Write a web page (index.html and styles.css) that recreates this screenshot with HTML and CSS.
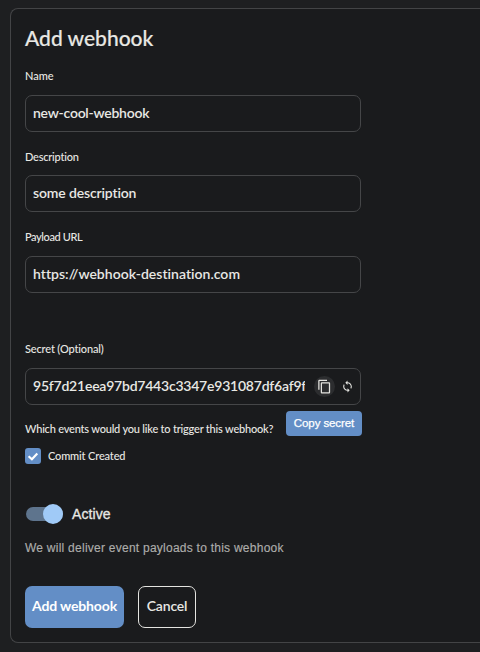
FILE: index.html
```html
<!DOCTYPE html>
<html lang="en">
<head>
<meta charset="utf-8">
<title>Add webhook</title>
<link rel="stylesheet" href="styles.css">
</head>
<body>
<main class="card">
  <h1 class="title">Add webhook</h1>
  <div class="field field-name">
    <div class="label">Name</div>
    <div class="input"><span class="v-name">new-cool-webhook</span></div>
  </div>
  <div class="field field-desc">
    <div class="label l-desc">Description</div>
    <div class="input"><span class="v-desc">some description</span></div>
  </div>
  <div class="field field-url">
    <div class="label l-url">Payload URL</div>
    <div class="input"><span class="v-url">https://webhook-destination.com</span></div>
  </div>
  <div class="field field-secret">
    <div class="label l-secret">Secret (Optional)</div>
    <div class="input">
      <span class="secret">95f7d21eea97bd7443c3347e931087df6af9f</span>
      <span class="copy">
        <svg width="15" height="15" viewBox="0 0 24 24" fill="#e4e4e0"><path d="M16 1H4c-1.100 0-2 .9-2 2v14h2V3h12zm3 4H8c-1.100 0-2 .9-2 2v14c0 1.100.9 2 2 2h11c1.100 0 2-.9 2-2V7c0-1.100-.9-2-2-2m0 16H8V7h11z"/></svg>
      </span>
      <svg class="renew" width="13" height="13" viewBox="0 0 24 24" fill="#e4e4e0"><path d="M12 4V1L8 5l4 4V6c3.310 0 6 2.690 6 6 0 1.010-.25 1.970-.7 2.800l1.460 1.460C19.540 15.030 20 13.570 20 12c0-4.420-3.580-8-8-8m0 14c-3.310 0-6-2.690-6-6 0-1.010.25-1.970.7-2.800L5.240 7.740C4.460 8.970 4 10.430 4 12c0 4.420 3.580 8 8 8v3l4-4-4-4z"/></svg>
      <span class="tooltip">Copy secret</span>
    </div>
  </div>
  <div class="question">Which events would you like to trigger this webhook?</div>
  <div class="check-row">
    <span class="checkbox"><svg width="16" height="16" viewBox="0 0 16 16"><path d="M3.600 8.300 6.900 11.300 12.300 5.600" fill="none" stroke="#fff" stroke-width="2.200"/></svg></span>
    <span class="check-label">Commit Created</span>
  </div>
  <div class="switch-row">
    <span class="track"><span class="knob"></span></span>
    <span class="active">Active</span>
  </div>
  <p class="hint">We will deliver event payloads to this webhook</p>
  <div class="actions">
    <button class="btn primary">Add webhook</button>
    <button class="btn outline">Cancel</button>
  </div>
</main>
</body>
</html>
```
FILE: styles.css
```css
* { box-sizing: border-box; }
body {
  margin: 0;
  height: 652px;
  padding: 8px 0 0 10px;
  overflow: hidden;
  background: #1e1f21;
  color: #e8e8e4;
  font-family: Lato, "Liberation Sans", sans-serif;
}
.card {
  height: 635px;
  padding: 16px 14px 14px;
  border: 1px solid #434446;
  border-right: 0;
  border-radius: 8px 0 0 8px;
  background: #1a1b1d;
}
.title {
  margin: 0 0 15px;
  font-size: 21px;
  line-height: 26px;
  font-weight: 500;
  letter-spacing: 0;
  -webkit-text-stroke: .15px #e8e8e4;
}
.field { width: 336px; margin-bottom: 16px; }
.label {
  height: 20px;
  margin-bottom: 8px;
  font-size: 11px;
  line-height: 20px;
  font-weight: 500;
}
.field-name .label { margin-bottom: 9px; }
.field-name { margin-bottom: 15px; }
.field-desc { margin-bottom: 15px; }
.field-url .label, .field-secret .label { margin-bottom: 9px; }
.l-desc { letter-spacing: -.22px; }
.l-url { letter-spacing: -.4px; }
.l-secret { letter-spacing: -.15px; }
.input {
  position: relative;
  display: flex;
  align-items: center;
  height: 37px;
  padding: 0 7px 2px;
  border: 1px solid #454648;
  border-radius: 7px;
  font-size: 14px;
  font-weight: 600;
  white-space: nowrap;
}
.v-name { letter-spacing: -.25px; }
.v-desc { letter-spacing: -.15px; }
.v-url { letter-spacing: .02px; }
.field-url { margin-bottom: 46px; }
.field-secret { margin-bottom: 15px; }
.field-secret .input { padding: 0 6px 0 7px; }
.secret { flex: none; width: 272px; padding-bottom: 2px; overflow: hidden; letter-spacing: -.22px; }
.copy {
  display: flex;
  flex: none;
  align-items: center;
  justify-content: center;
  width: 21px;
  height: 21px;
  margin-left: 9px;
  border-radius: 50%;
  background: #2c2d2f;
}
.renew { margin-left: 6px; flex: none; }
.copy svg { flex: none; }
.tooltip {
  position: absolute;
  left: 260px;
  top: 42px;
  width: 76px;
  height: 25px;
  border-radius: 4px;
  background: #638ec6;
  color: #fff;
  font: 400 11.5px/25px "Liberation Sans", sans-serif;
  letter-spacing: -.1px;
  text-align: center;
  -webkit-text-stroke: .25px #fff;
}
.question { height: 18px; font-size: 11px; line-height: 18px; font-weight: 500; letter-spacing: -.2px; }
.check-row { display: flex; align-items: center; height: 16px; margin-top: 10px; font-size: 11px; font-weight: 500; letter-spacing: -.15px; }
.check-label { padding-bottom: 1px; line-height: 14px; }
.checkbox { display: block; width: 16px; height: 16px; margin-right: 7px; border-radius: 3px; background: #638ec6; }
.checkbox svg { display: block; }
.switch-row { display: flex; align-items: center; height: 20px; margin-top: 40px; padding-left: 1px; }
.track { display: flex; align-items: center; justify-content: flex-end; width: 37px; height: 14px; border-radius: 7px; background: #5e748d; }
.knob { width: 20px; height: 20px; flex: none; border-radius: 50%; background: #a0caf7; }
.active { margin-left: 9px; font: 400 14px/20px "Liberation Sans", sans-serif; -webkit-text-stroke: .3px #e8e8e4; letter-spacing: .1px; }
.hint { margin: 15px 0 0; color: #adadab; font: 400 12px/18px "Liberation Sans", sans-serif; letter-spacing: .25px; -webkit-text-stroke: .15px #adadab; }
.actions { display: flex; gap: 14px; margin-top: 29px; }
.btn {
  height: 42px;
  padding: 0 0 3px;
  border: 0;
  border-radius: 7px;
  color: #fff;
  font: 700 14px Lato, sans-serif;
  letter-spacing: -.15px;
}
.primary { width: 99px; background: #638ec6; }
.outline { width: 58px; border: 1px solid #e4e4e0; background: transparent; color: #e8e8e4; font-weight: 600; }
```
